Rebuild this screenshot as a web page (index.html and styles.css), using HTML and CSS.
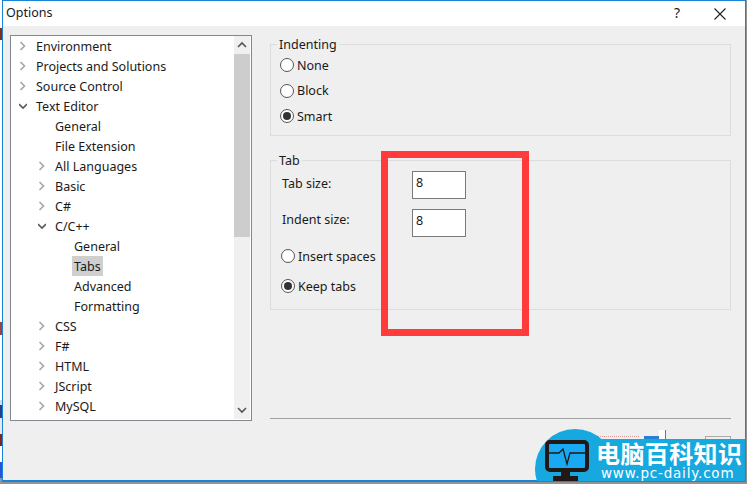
FILE: index.html
```html
<!DOCTYPE html>
<html lang="en">
<head>
    <meta charset="UTF-8">
    <title>Options</title>
    <link rel="stylesheet" href="styles.css">
</head>
<body>
    <div class="backdrop"></div>
    <div class="window">
        <div class="titlebar">
            <span class="title">Options</span>
            <span class="help">?</span>
            <svg class="close" width="12" height="12" viewBox="0 0 12 12"><path d="M0.5 0.5L11.5 11.5M11.5 0.5L0.5 11.5" stroke="#222" stroke-width="1.1" fill="none"/></svg>
        </div>
        <div class="content">
            <div class="tree-box">
                <ul class="tree">
                    <li class="row"><svg class="chev" width="8" height="10" viewBox="0 0 8 10"><path d="M1.5 1L5.5 5L1.5 9" /></svg><span>Environment</span></li>
                    <li class="row"><svg class="chev" width="8" height="10" viewBox="0 0 8 10"><path d="M1.5 1L5.5 5L1.5 9" /></svg><span>Projects and Solutions</span></li>
                    <li class="row"><svg class="chev" width="8" height="10" viewBox="0 0 8 10"><path d="M1.5 1L5.5 5L1.5 9" /></svg><span>Source Control</span></li>
                    <li class="row"><svg class="chev open" width="8" height="10" viewBox="0 0 8 10"><path d="M0 3L4 7L8 3" /></svg><span>Text Editor</span></li>
                    <li class="row lvl1 leaf"><span>General</span></li>
                    <li class="row lvl1 leaf"><span>File Extension</span></li>
                    <li class="row lvl1"><svg class="chev" width="8" height="10" viewBox="0 0 8 10"><path d="M1.5 1L5.5 5L1.5 9" /></svg><span>All Languages</span></li>
                    <li class="row lvl1"><svg class="chev" width="8" height="10" viewBox="0 0 8 10"><path d="M1.5 1L5.5 5L1.5 9" /></svg><span>Basic</span></li>
                    <li class="row lvl1"><svg class="chev" width="8" height="10" viewBox="0 0 8 10"><path d="M1.5 1L5.5 5L1.5 9" /></svg><span>C#</span></li>
                    <li class="row lvl1"><svg class="chev open" width="8" height="10" viewBox="0 0 8 10"><path d="M0 3L4 7L8 3" /></svg><span>C/C++</span></li>
                    <li class="row lvl2 leaf"><span>General</span></li>
                    <li class="row lvl2 leaf"><span class="selected">Tabs</span></li>
                    <li class="row lvl2 leaf"><span>Advanced</span></li>
                    <li class="row lvl2 leaf"><span>Formatting</span></li>
                    <li class="row lvl1"><svg class="chev" width="8" height="10" viewBox="0 0 8 10"><path d="M1.5 1L5.5 5L1.5 9" /></svg><span>CSS</span></li>
                    <li class="row lvl1"><svg class="chev" width="8" height="10" viewBox="0 0 8 10"><path d="M1.5 1L5.5 5L1.5 9" /></svg><span>F#</span></li>
                    <li class="row lvl1"><svg class="chev" width="8" height="10" viewBox="0 0 8 10"><path d="M1.5 1L5.5 5L1.5 9" /></svg><span>HTML</span></li>
                    <li class="row lvl1"><svg class="chev" width="8" height="10" viewBox="0 0 8 10"><path d="M1.5 1L5.5 5L1.5 9" /></svg><span>JScript</span></li>
                    <li class="row lvl1"><svg class="chev" width="8" height="10" viewBox="0 0 8 10"><path d="M1.5 1L5.5 5L1.5 9" /></svg><span>MySQL</span></li>
                </ul>
                <div class="scrollbar">
                    <svg class="arrow" width="16" height="18" viewBox="0 0 16 18"><path d="M4 11L8 7L12 11"/></svg>
                    <div class="track"><div class="thumb"></div></div>
                    <svg class="arrow" width="16" height="18" viewBox="0 0 16 18"><path d="M4 7L8 11L12 7"/></svg>
                </div>
            </div>
            <div class="panel">
                <fieldset class="group group-indent">
                    <legend>Indenting</legend>
                    <label class="radio"><span class="dot"></span>None</label>
                    <label class="radio"><span class="dot"></span>Block</label>
                    <label class="radio"><span class="dot on"></span>Smart</label>
                </fieldset>
                <fieldset class="group group-tab">
                    <legend>Tab</legend>
                    <div class="field"><span class="field-label label-tab">Tab size:</span><span class="input">8</span></div>
                    <div class="field"><span class="field-label label-indent">Indent size:</span><span class="input">8</span></div>
                    <label class="radio first"><span class="dot"></span>Insert spaces</label>
                    <label class="radio"><span class="dot on"></span>Keep tabs</label>
                </fieldset>
                <div class="separator"></div>
            </div>
        </div>
    </div>

    <div class="highlight"></div>

    <div class="watermark">
        <div class="ghost">
            <span class="ghost-red"></span>
            <span class="ghost-blue"></span>
            <span class="ghost-white"></span>
            <span class="ghost-btn"></span>
        </div>
        <div class="disc">
            <svg width="46" height="41" viewBox="0 0 46 41">
                <rect x="2" y="2" width="40" height="28" rx="3" fill="#19a9f2" stroke="#231815" stroke-width="4"/>
                <path d="M4 13H14L18 9L22 24L25 13H40" fill="none" stroke="#231815" stroke-width="1.3"/>
                <path d="M16 31H25V36H33V41H8V36H16Z" fill="#231815"/>
            </svg>
        </div>
        <div class="band">
            <div class="wm-title">电脑百科知识</div>
            <div class="wm-url">www.pc-daily.com</div>
        </div>
    </div>
</body>
</html>
```

FILE: styles.css
```css
* {
    box-sizing: border-box;
}
html, body {
    margin: 0;
    height: 100%;
}
body {
    width: 747px;
    height: 484px;
    overflow: hidden;
    position: relative;
    padding-left: 2px;
    background-color: #939393;
    font-family: "Noto Sans", sans-serif;
    font-size: 12.5px;
    color: #1a1a1a;
}

/* Strip of the desktop left of the dialog */
.backdrop {
    position: absolute;
    left: 0;
    top: 0;
    width: 2px;
    height: 484px;
    background: linear-gradient(to bottom,
        #fff 0 28px, #8a2a1a 28px 40px, #fff 40px 322px,
        #a04040 322px 335px, #fff 335px 400px, #d8dde0 400px 405px,
        #26408a 405px 418px, #e8e8e8 418px 434px, #8a2020 434px 446px,
        #fff 446px 462px, #2a50e0 462px 478px, #939393 478px);
}
.window {
    width: 744px;
    height: 482px;
    border: 1px solid #1883d7;
    border-bottom-width: 2px;
    background-color: #efefef;
}
.titlebar {
    height: 25px;
    background-color: #fff;
    display: flex;
    align-items: center;
    padding: 0 0 2px 3px;
}
.title {
    flex-grow: 1;
}
.help {
    margin-right: 34px;
    font-size: 14px;
}
.close {
    margin-right: 19px;
    margin-top: 2px;
}
.content {
    display: flex;
    padding: 9px 14px 0 7px;
}

/* Tree on the left */
.tree-box {
    width: 242px;
    height: 386px;
    flex-shrink: 0;
    display: flex;
    background-color: #fff;
    border: 1px solid #828790;
}
.tree {
    list-style: none;
    margin: 0;
    padding: 0;
    flex-grow: 1;
}
.row {
    height: 20px;
    display: flex;
    align-items: center;
    padding-left: 8px;
    white-space: nowrap;
}
.lvl1 {
    padding-left: 27px;
}
.lvl2 {
    padding-left: 46px;
}
.leaf > span {
    margin-left: 17px;
}
.chev {
    margin-right: 9px;
    flex-shrink: 0;
}
.chev path {
    fill: none;
    stroke: #a6a6a6;
    stroke-width: 1.6;
}
.chev.open path {
    stroke: #595959;
}
.leaf > .selected {
    background-color: #cfcfcf;
    padding: 0 2px;
    margin-left: 15px;
    height: 20px;
    display: flex;
    align-items: center;
}
.scrollbar {
    width: 16px;
    margin: 0 1px 1px 0;
    display: flex;
    flex-direction: column;
    background-color: #f0f0f0;
}
.arrow path {
    fill: none;
    stroke: #555;
    stroke-width: 1.6;
}
.track {
    flex-grow: 1;
}
.thumb {
    height: 183px;
    background-color: #cdcdcd;
}

/* Right side */
.panel {
    flex-grow: 1;
    margin-left: 18px;
}
.group {
    margin: 0;
    padding: 0 0 0 10px;
    border: 1px solid #dcdcdc;
    min-width: 0;
}
.group legend {
    position: relative;
    top: 1px;
    padding: 0 2px;
    margin-left: -4px;
    line-height: 18px;
}
.group-indent {
    height: 101px;
}
.group-tab {
    height: 159px;
    margin-top: 15px;
}
.radio {
    display: flex;
    align-items: center;
    height: 18px;
    margin-top: 7.5px;
}
.group-indent .radio {
    margin-left: -1px;
}
.group-indent .radio:first-of-type {
    margin-top: 3px;
}
.dot {
    width: 14px;
    height: 14px;
    margin-right: 3px;
    border: 1px solid #555;
    border-radius: 50%;
    background-color: #fff;
    display: flex;
    align-items: center;
    justify-content: center;
}
.dot.on::before {
    content: "";
    width: 8px;
    height: 8px;
    border-radius: 50%;
    background-color: #333;
}
.group-tab .radio {
    margin-top: 12px;
}
.group-tab .radio.first {
    margin-top: 10px;
}
.field {
    display: flex;
    align-items: flex-start;
    margin-top: 10px;
}
.group-tab .field:first-of-type {
    margin-top: 2px;
}
.field-label {
    width: 130px;
    margin-left: 1px;
    line-height: 18px;
}
.label-tab {
    padding-top: 4px;
}
.label-indent {
    padding-top: 2px;
}
.input {
    width: 54px;
    height: 28px;
    padding: 2px 0 0 3px;
    border: 1px solid #7a7a7a;
    background-color: #fff;
    line-height: 18px;
}
.separator {
    height: 1px;
    margin-top: 108px;
    background-color: #a0a0a0;
}

/* Red marker over the screenshot */
.highlight {
    position: absolute;
    left: 381px;
    top: 151px;
    width: 148px;
    height: 185px;
    border: 7px solid #ff3b3b;
}

/* Site watermark, bottom right */
.watermark {
    position: absolute;
    left: 535px;
    top: 429px;
    width: 210px;
    height: 52px;
    overflow: hidden;
}
.disc {
    position: absolute;
    left: 0;
    top: 0;
    width: 80px;
    height: 80px;
    padding: 11px 0 0 10px;
    border-radius: 50%;
    background-color: #18a8e0;
}
.band {
    position: absolute;
    left: 60px;
    top: 10px;
    right: 0;
    height: 42px;
    padding-left: 1px;
    background-color: #18a8e0;
    color: #fff;
}
.wm-title {
    font-family: "Noto Sans CJK SC", sans-serif;
    font-weight: 700;
    font-size: 24px;
    line-height: 28px;
    letter-spacing: 0.4px;
    white-space: nowrap;
}
.wm-url {
    font-family: "DejaVu Sans", sans-serif;
    font-size: 13.5px;
    line-height: 13px;
    letter-spacing: 0.8px;
    padding-left: 5px;
    white-space: nowrap;
}

/* Blurred remains of the dialog buttons above the band */
.ghost {
    position: absolute;
    left: 55px;
    top: 1px;
    right: 14px;
    height: 9px;
    display: flex;
    align-items: flex-end;
}
.ghost-red {
    width: 50px;
    height: 3px;
    border-top: 1px dotted #d89a9a;
}
.ghost-blue {
    width: 15px;
    height: 3px;
    margin-left: 5px;
    background-color: #2a7fd0;
}
.ghost-white {
    width: 7px;
    height: 9px;
    background-color: #fff;
    border-right: 1px solid #777;
}
.ghost-btn {
    width: 27px;
    height: 3px;
    margin-left: 39px;
    border: 1px solid #aaa;
    border-bottom: 0;
}
```
